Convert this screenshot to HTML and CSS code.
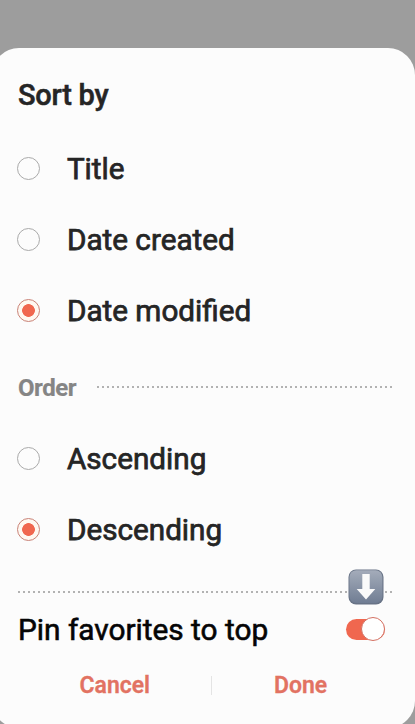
FILE: index.html
```html
<!DOCTYPE html>
<html lang="en">
<head>
<meta charset="utf-8">
<title>Sort by</title>
<link rel="stylesheet" href="styles.css">
</head>
<body>
<main class="sheet">
  <h1 class="title"><span>Sort by</span></h1>
  <div class="options">
    <div class="option"><span class="radio"></span><span class="label">Title</span></div>
    <div class="option"><span class="radio"></span><span class="label">Date created</span></div>
    <div class="option"><span class="radio checked"></span><span class="label">Date modified</span></div>
  </div>
  <div class="section"><h2 class="section-name">Order</h2><span class="dots"></span></div>
  <div class="options">
    <div class="option"><span class="radio"></span><span class="label">Ascending</span></div>
    <div class="option"><span class="radio checked"></span><span class="label">Descending</span></div>
  </div>
  <div class="divider">
    <span class="dots"></span>
    <svg class="arrow" width="36" height="36" viewBox="0 0 36 36">
      <defs>
        <linearGradient id="key" x1="0" y1="0" x2="0" y2="1">
          <stop offset="0" stop-color="#a4acba"/>
          <stop offset="1" stop-color="#707d93"/>
        </linearGradient>
      </defs>
      <rect x=".5" y=".5" width="35" height="35" rx="7.5" fill="#687386"/>
      <rect x="1.4" y="1.2" width="33" height="32.8" rx="6.8" fill="url(#key)"/>
      <path d="M14.3 5h7.4v15h5.6L18 30.4 8.7 20h5.6z" fill="#fafafa"/>
    </svg>
  </div>
  <div class="pin"><span class="pin-label">Pin favorites to top</span><span class="switch"><span class="knob"></span></span></div>
  <div class="actions"><span class="action cancel">Cancel</span><span class="bar"></span><span class="action done">Done</span></div>
</main>
</body>
</html>
```
FILE: styles.css
```css
* { box-sizing: border-box; }
body {
  margin: 0;
  height: 724px;
  overflow: hidden;
  padding-top: 48px;
  background: #9d9d9d;
  font-family: Roboto, sans-serif;
  color: #252525;
}
.sheet {
  width: 423px;
  height: 680px;
  margin-left: -8px;
  padding: 0 22px 0 26px;
  border-radius: 27px;
  background: #fcfcfc;
}
.title {
  margin: 0;
  height: 84px;
  padding-top: 9px;
  font-size: 29px;
  line-height: 76px;
  font-weight: 500;
  letter-spacing: -.25px;
  -webkit-text-stroke: .5px currentColor;
}
.option { display: flex; align-items: center; height: 71px; }
.options { line-height: 71px; }
.radio {
  flex: none;
  width: 23px;
  height: 23px;
  margin: 1px 26.5px 0 -.6px;
  border: 1px solid #aaa;
  border-radius: 50%;
}
.radio.checked {
  border-color: #c98277;
  background: radial-gradient(circle, #f0674f 0 6px, #fff8f1 6.7px);
}
.label {
  font-size: 29.7px;
  padding-top: 2px;
  -webkit-text-stroke: .75px currentColor;
}
.section { display: flex; align-items: center; height: 77px; }
.section-name {
  width: 79px;
  margin: 0;
  padding-top: 8px;
  font-size: 24px;
  letter-spacing: -.45px;
  font-weight: 700;
  color: #858585;
  -webkit-text-stroke: .2px currentColor;
}
.dots {
  flex: 1;
  height: 2px;
  background: repeating-linear-gradient(90deg, #b2b2b2 0 2px, transparent 2px 4.96px);
}
.section .dots { margin-top: 6px; }
.divider { position: relative; display: flex; align-items: center; height: 56px; }
.arrow { position: absolute; right: 9px; top: 5px; }
.pin { display: flex; align-items: center; justify-content: space-between; height: 40px; margin-top: -11px; padding-right: 8px; }
.pin-label { font-size: 29.8px; color: #050505; -webkit-text-stroke: .6px currentColor; }
.switch {
  display: flex;
  justify-content: flex-end;
  align-items: center;
  width: 39px;
  height: 21px;
  border-radius: 11px;
  background: #f0674f;
}
.knob { width: 24px; height: 24px; flex: none; border: 1px solid #d37062; border-radius: 50%; background: #fff; }
.actions { display: flex; align-items: center; height: 60px; margin-top: 6px; }
.action { font-size: 23px; font-weight: 600; color: #e27262; -webkit-text-stroke: .3px currentColor; }
.cancel { width: 193px; padding-left: 61.5px; }
.bar { width: 1px; height: 19px; background: #e4e4e4; }
.done { padding-left: 62px; }
```
